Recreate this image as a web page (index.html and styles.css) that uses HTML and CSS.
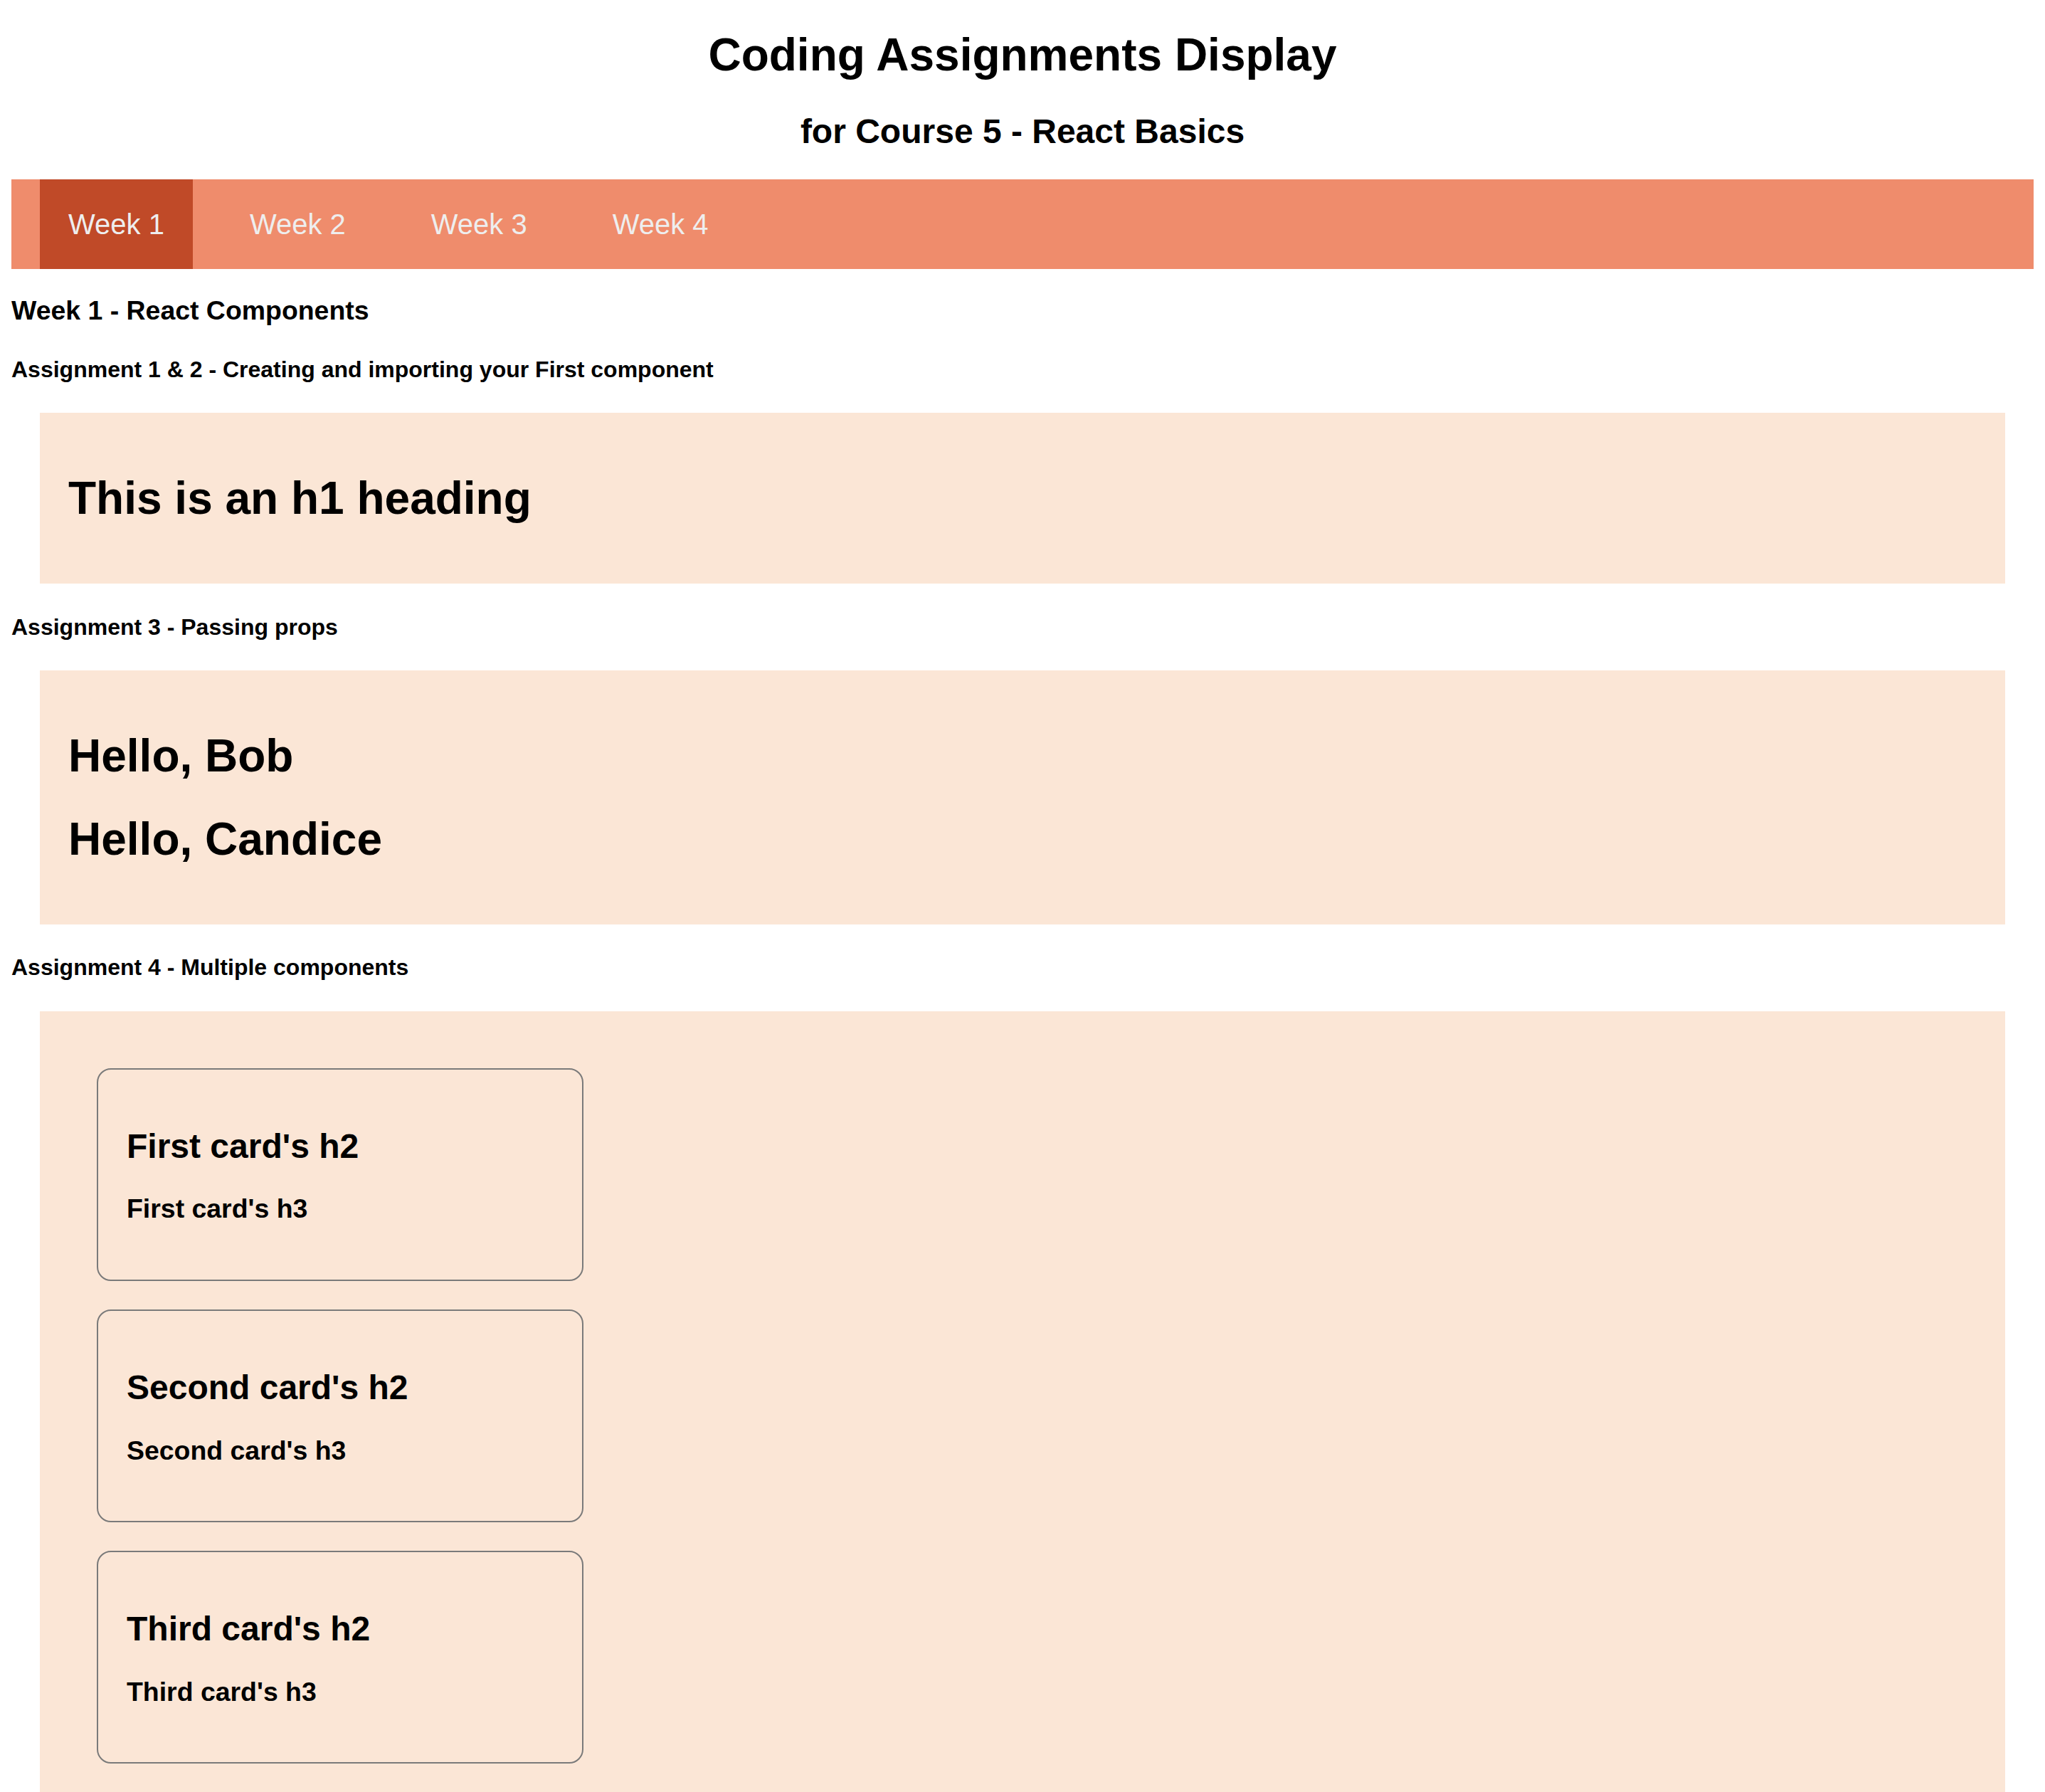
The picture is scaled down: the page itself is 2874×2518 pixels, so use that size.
FILE: index.html
```html
<!DOCTYPE html>
<html lang="en">
<head>
<meta charset="utf-8">
<title>Coding Assignments Display</title>
<link rel="stylesheet" href="styles.css">
</head>
<body>
  <header class="page-header">
    <h1 class="title">Coding Assignments Display</h1>
    <h2 class="subtitle">for Course 5 - React Basics</h2>
  </header>
  <nav class="tabs">
    <a class="tab tab-active">Week 1</a>
    <a class="tab">Week 2</a>
    <a class="tab">Week 3</a>
    <a class="tab">Week 4</a>
  </nav>
  <main>
    <h3 class="week-title">Week 1 - React Components</h3>

    <h4 class="assignment-title">Assignment 1 &amp; 2 - Creating and importing your First component</h4>
    <section class="demo">
      <h1 class="demo-h1">This is an h1 heading</h1>
    </section>

    <h4 class="assignment-title">Assignment 3 - Passing props</h4>
    <section class="demo">
      <h1 class="demo-h1">Hello, Bob</h1>
      <h1 class="demo-h1">Hello, Candice</h1>
    </section>

    <h4 class="assignment-title">Assignment 4 - Multiple components</h4>
    <section class="demo">
      <div class="card">
        <h2 class="card-h2">First card's h2</h2>
        <h3 class="card-h3">First card's h3</h3>
      </div>
      <div class="card">
        <h2 class="card-h2">Second card's h2</h2>
        <h3 class="card-h3">Second card's h3</h3>
      </div>
      <div class="card">
        <h2 class="card-h2">Third card's h2</h2>
        <h3 class="card-h3">Third card's h3</h3>
      </div>
    </section>
  </main>
</body>
</html>
```

FILE: styles.css
```css
html {
  background: #ffffff;
}

body {
  margin: 16px;
  font-family: "Liberation Sans", Arial, Helvetica, sans-serif;
  color: #000000;
}

.page-header {
  text-align: center;
}

.title {
  font-size: 64px;
  font-weight: bold;
  margin: 24px 0 42.88px;
}

.subtitle {
  font-size: 48px;
  font-weight: bold;
  margin: 39.84px 0;
}

.tabs {
  display: flex;
  gap: 40px;
  padding: 0 40px;
  background: #ef8c6c;
}

.tab {
  display: block;
  padding: 40px;
  font-size: 40px;
  line-height: 46px;
  color: #eeeeee;
  text-decoration: none;
}

.tab-active {
  background: #c04a28;
}

.week-title {
  font-size: 37.44px;
  font-weight: bold;
  margin: 37.44px 0;
}

.assignment-title {
  font-size: 32px;
  font-weight: bold;
  margin: 42.56px 0;
}

.demo {
  margin: 0 40px;
  padding: 40px;
  background: #fbe6d6;
}

.demo-h1 {
  font-size: 64px;
  font-weight: bold;
  margin: 42.88px 0;
}

.card {
  width: 600px;
  margin: 40px;
  padding: 40px;
  border: 2px solid #7a7a7a;
  border-radius: 20px;
}

.card-h2 {
  font-size: 48px;
  font-weight: bold;
  margin: 39.84px 0;
}

.card-h3 {
  font-size: 37.44px;
  font-weight: bold;
  margin: 37.44px 0;
}
```
